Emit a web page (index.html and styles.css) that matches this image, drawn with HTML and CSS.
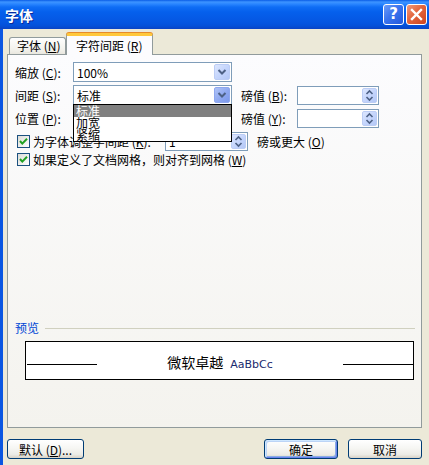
FILE: index.html
```html
<!DOCTYPE html>
<html lang="zh-CN">
<head>
<meta charset="utf-8">
<title>字体</title>
<link rel="stylesheet" href="styles.css">
</head>
<body>
<div class="win">
  <div class="titlebar">
    <span class="title">字体</span>
    <div class="tbtns">
      <span class="tb help">?</span>
      <span class="tb close"><svg width="13" height="13" viewBox="0 0 13 13"><path d="M2 2 L11 11 M11 2 L2 11" stroke="#fff" stroke-width="2.4" stroke-linecap="square"/></svg></span>
    </div>
  </div>
  <div class="main">
    <div class="tabs">
      <div class="tab">字体 (<u>N</u>)</div>
      <div class="tab active">字符间距 (<u>R</u>)</div>
    </div>
    <div class="panel">
      <div class="row r1">
        <span class="lbl">缩放 (<u>C</u>):</span>
        <div class="combo"><span class="val">100%</span><span class="dd"><svg width="16" height="16" viewBox="0 0 16 16"><polyline points="4.5,6 8,9.5 11.5,6" fill="none" stroke="#4D6185" stroke-width="2"/></svg></span></div>
      </div>
      <div class="row r2">
        <span class="lbl">间距 (<u>S</u>):</span>
        <div class="combo"><span class="val">标准</span><span class="dd pressed"><svg width="16" height="16" viewBox="0 0 16 16"><polyline points="4.5,6 8,9.5 11.5,6" fill="none" stroke="#4D6185" stroke-width="2"/></svg></span></div>
        <span class="lbl2">磅值 (<u>B</u>):</span>
        <div class="field"><span class="spin"><svg width="15" height="15" viewBox="0 0 15 15"><polyline points="4.5,6 7.5,3 10.5,6" fill="none" stroke="#4D6185" stroke-width="1.6"/><polyline points="4.5,9 7.5,12 10.5,9" fill="none" stroke="#4D6185" stroke-width="1.6"/></svg></span></div>
      </div>
      <div class="row r3">
        <span class="lbl">位置 (<u>P</u>):</span>
        <div class="combo"><span class="val"></span><span class="dd"><svg width="16" height="16" viewBox="0 0 16 16"><polyline points="4.5,6 8,9.5 11.5,6" fill="none" stroke="#4D6185" stroke-width="2"/></svg></span></div>
        <span class="lbl2">磅值 (<u>Y</u>):</span>
        <div class="field"><span class="spin"><svg width="15" height="15" viewBox="0 0 15 15"><polyline points="4.5,6 7.5,3 10.5,6" fill="none" stroke="#4D6185" stroke-width="1.6"/><polyline points="4.5,9 7.5,12 10.5,9" fill="none" stroke="#4D6185" stroke-width="1.6"/></svg></span></div>
      </div>
      <div class="row r4">
        <span class="chk"><svg width="11" height="11" viewBox="0 0 11 11"><polyline points="2,5 4.3,7.6 9,2.8" fill="none" stroke="#21A121" stroke-width="2"/></svg></span>
        <span class="clbl">为字体调整字间距 (<u>K</u>):</span>
        <div class="field field2"><span class="fval">1</span><span class="spin"><svg width="15" height="15" viewBox="0 0 15 15"><polyline points="4.5,6 7.5,3 10.5,6" fill="none" stroke="#4D6185" stroke-width="1.6"/><polyline points="4.5,9 7.5,12 10.5,9" fill="none" stroke="#4D6185" stroke-width="1.6"/></svg></span></div>
        <span class="after">磅或更大 (<u>O</u>)</span>
      </div>
      <div class="row r5">
        <span class="chk"><svg width="11" height="11" viewBox="0 0 11 11"><polyline points="2,5 4.3,7.6 9,2.8" fill="none" stroke="#21A121" stroke-width="2"/></svg></span>
        <span class="clbl2">如果定义了文档网格，则对齐到网格 (<u>W</u>)</span>
      </div>
      <div class="list">
        <div class="item sel">标准</div>
        <div class="item">加宽</div>
        <div class="item">紧缩</div>
      </div>
      <div class="phead"><span class="ptitle">预览</span><span class="pline"></span></div>
      <div class="preview">
        <span class="uline"></span>
        <span class="ptext"><span class="cjk">微软卓越</span><span class="lat">AaBbCc</span></span>
        <span class="uline"></span>
      </div>
    </div>
    <div class="buttons">
      <span class="btn wide">默认 (<u>D</u>)...</span>
      <span class="btn default">确定</span>
      <span class="btn">取消</span>
    </div>
  </div>
</div>
</body>
</html>
```
FILE: styles.css
```css
* { box-sizing: border-box; }
html, body { margin: 0; padding: 0; }
body {
  width: 429px;
  height: 465px;
  overflow: hidden;
  background: #ECE9D8;
  font-family: "Noto Sans CJK SC", "DejaVu Sans", sans-serif;
  font-size: 12px;
  color: #000;
}
u { text-decoration: underline; text-underline-offset: 1px; }
.win { width: 429px; height: 465px; display: flex; flex-direction: column; }
.titlebar {
  height: 29px;
  flex: none;
  display: flex;
  align-items: center;
  padding: 0 2px 0 5px;
  background: linear-gradient(to bottom, #0A5DE6 0, #3D94FF 2px, #2A86FF 4px, #0F6DF5 7px, #0560EC 12px, #055AE6 18px, #0455E0 23px, #0450D8 26px, #0A43C4 29px);
}
.title {
  flex: 1;
  color: #fff;
  font-weight: bold;
  font-size: 14px;
  line-height: 16px;
  text-shadow: 1px 1px 0 #0A2A9A;
}
.tbtns { display: flex; gap: 2px; }
.tb {
  width: 21px;
  height: 21px;
  border: 1px solid #fff;
  border-radius: 3px;
  display: flex;
  align-items: center;
  justify-content: center;
}
.help {
  background: linear-gradient(135deg, #6C9CF8 0%, #3A74EE 45%, #2459DC 100%);
  color: #fff;
  font-family: "DejaVu Sans", sans-serif;
  font-weight: bold;
  font-size: 15px;
  line-height: 15px;
}
.close {
  background: linear-gradient(135deg, #F09A7C 0%, #E3653D 45%, #CC4420 100%);
}
.main {
  flex: 1;
  border-left: 3px solid #0A56E2;
  padding: 4px 0 0 4px;
  display: flex;
  flex-direction: column;
}
.tabs {
  display: flex;
  align-items: flex-end;
  height: 22px;
  padding-left: 2px;
  margin-bottom: -1px;
  position: relative;
  z-index: 1;
}
.tab {
  height: 17px;
  width: 57px;
  margin-bottom: 1px;
  border: 1px solid #919B9C;
  border-bottom: none;
  border-radius: 3px 3px 0 0;
  background: linear-gradient(#FEFEFE, #F3F2EC 70%, #E9E7DF);
  padding-left: 7px;
  line-height: 16px;
  white-space: nowrap;
}
.tab.active {
  height: 22px;
  width: 87px;
  margin-bottom: 0;
  padding-left: 9px;
  line-height: 19px;
  background: #FCFCFE;
  border-top: 3px solid #FFC83C;
  box-shadow: 0 -1px 0 #E68B2C;
}
.panel {
  width: 415px;
  height: 374px;
  border: 1px solid #919B9C;
  background: linear-gradient(#FCFCFE, #F4F3EE);
  padding: 7px 0 0 7px;
  display: flex;
  flex-direction: column;
  position: relative;
}
.row { display: flex; align-items: center; height: 20px; flex: none; }
.r2, .r3, .r4 { margin-top: 3px; }
.r5 { margin-top: 1px; height: 15px; }
.lbl { width: 58px; white-space: nowrap; }
.combo {
  width: 159px;
  height: 20px;
  border: 1px solid #7F9DB9;
  background: #fff;
  display: flex;
  align-items: center;
  padding-left: 3px;
}
.val { flex: 1; }
.dd {
  width: 16px;
  height: 16px;
  margin-right: 1px;
  border-radius: 2px;
  border: 1px solid #BCCDF5;
  background: linear-gradient(135deg, #DCE6FE 0%, #C3D4FC 55%, #B4C8F6 100%);
  display: flex;
}
.dd svg { margin: -1px; }
.dd.pressed {
  border-color: #8EA7EE;
  background: linear-gradient(135deg, #AFC3F6 0%, #8EA8F0 55%, #7C98EC 100%);
}
.lbl2 { margin-left: 9px; width: 56px; white-space: nowrap; }
.field {
  width: 82px;
  height: 19px;
  border: 1px solid #7F9DB9;
  background: #fff;
  display: flex;
  align-items: center;
  justify-content: flex-end;
}
.spin {
  width: 15px;
  height: 15px;
  margin-right: 1px;
  border-radius: 2px;
  border: 1px solid #BCCDF5;
  background: linear-gradient(135deg, #DCE6FE 0%, #C3D4FC 55%, #B4C8F6 100%);
  display: flex;
}
.spin svg { margin: -1px; }
.chk {
  width: 13px;
  height: 13px;
  margin-left: 2px;
  border: 1px solid #1C5180;
  background: linear-gradient(135deg, #DCDCD7, #FFFFFF);
  display: flex;
  flex: none;
}
.clbl { margin-left: 3px; width: 132px; white-space: nowrap; }
.field2 { width: 83px; justify-content: space-between; }
.fval { padding-left: 3px; }
.after { margin-left: 9px; white-space: nowrap; }
.clbl2 { margin-left: 3px; white-space: nowrap; }
.list {
  position: absolute;
  left: 65px;
  top: 49px;
  width: 159px;
  border: 1px solid #000;
  background: #fff;
  z-index: 2;
}
.item { height: 12px; line-height: 12px; padding-left: 2px; }
.item.sel { background: #808080; color: #fff; }
.phead {
  margin-top: 154px;
  height: 14px;
  display: flex;
  align-items: center;
  flex: none;
}
.ptitle { color: #0046D5; line-height: 14px; }
.pline { flex: 1; height: 1px; background: #D0D0BF; margin: 0 6px; }
.preview {
  margin: 6px 0 0 10px;
  width: 389px;
  height: 39px;
  border: 1px solid #000;
  background: #fff;
  display: flex;
  align-items: center;
  flex: none;
}
.uline { width: 70px; height: 1px; background: #000; margin-top: 8px; flex: none; }
.uline:first-child { margin-left: 1px; }
.ptext { flex: 1; text-align: center; margin-top: 2px; white-space: nowrap; }
.cjk { font-size: 14px; }
.lat { font-family: "DejaVu Sans", sans-serif; font-size: 11px; margin-left: 7px; color: #1A2A6E; }
.buttons {
  width: 415px;
  margin-top: 11px;
  display: flex;
  gap: 10px;
}
.btn {
  width: 74px;
  height: 20px;
  border: 1px solid #003C74;
  border-radius: 3px;
  background: linear-gradient(#FFFFFF 0%, #F6F6F3 45%, #ECEBE6 80%, #D8D2C6 100%);
  display: flex;
  align-items: center;
  justify-content: center;
  white-space: nowrap;
}
.btn.wide { width: 77px; margin-right: auto; }
.btn.default {
  box-shadow: inset 1px 1px 0 #CEE7FF, inset -1px -1px 0 #6982EE, inset 2px 2px 0 #BCD4F6, inset -2px -2px 0 #89ADE4;
}
```
